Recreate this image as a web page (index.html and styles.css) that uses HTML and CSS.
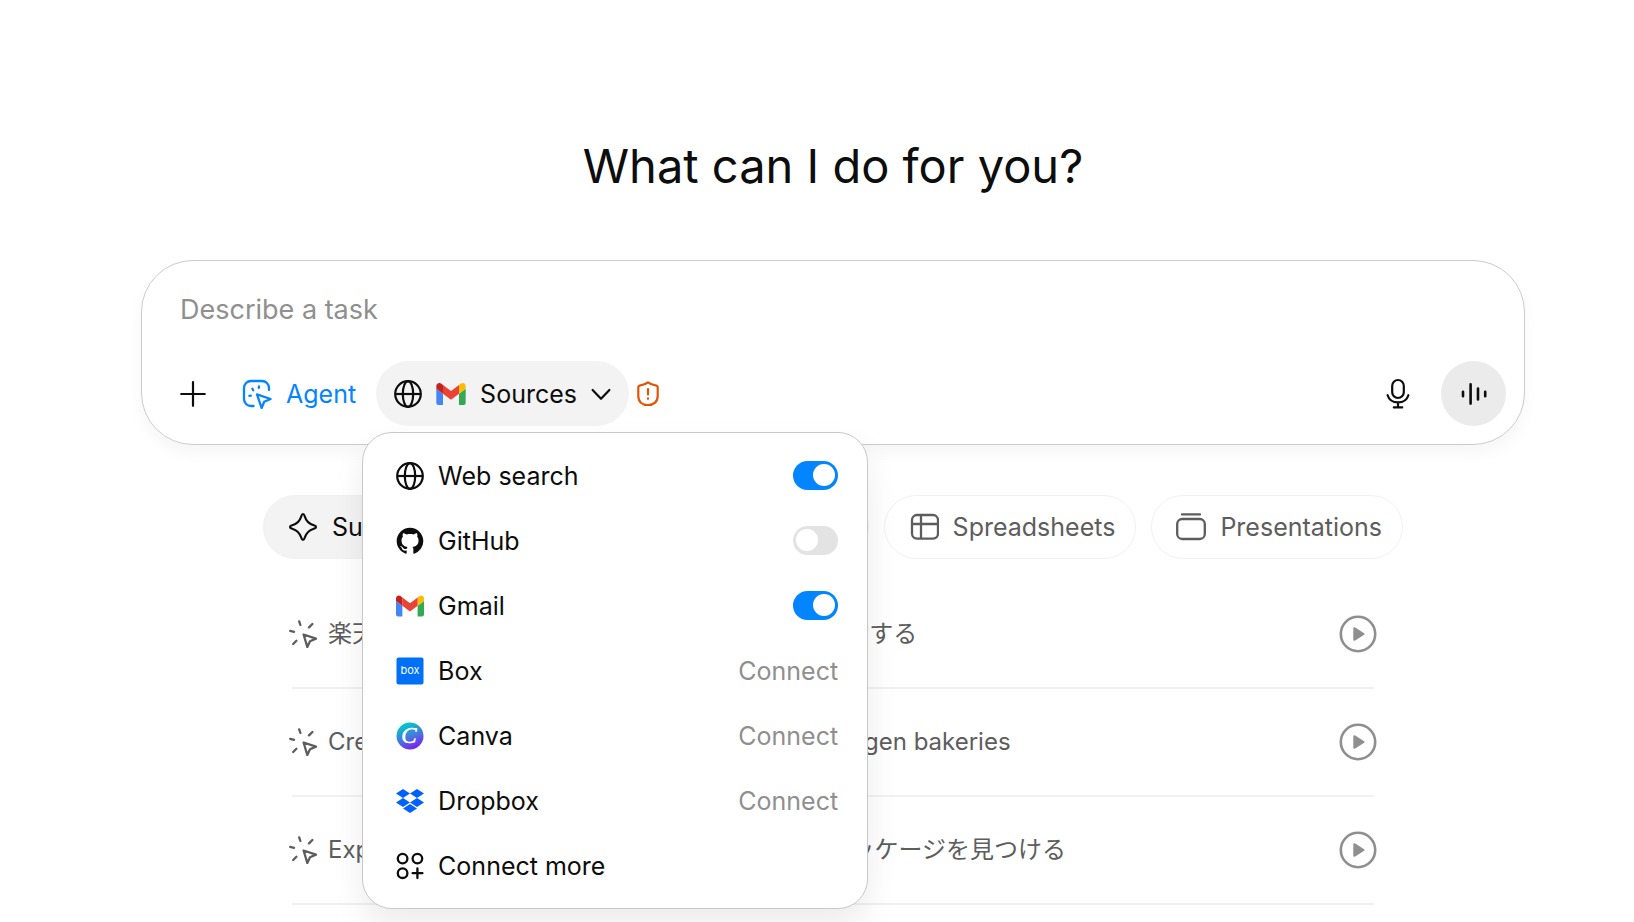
FILE: index.html
```
<!DOCTYPE html>
<html lang="en">
<head>
  <meta charset="UTF-8">
  <meta name="viewport" content="width=device-width, initial-scale=1">
  <title>What can I do for you?</title>
  <link rel="stylesheet" href="styles.css">
</head>
<body>
  <!-- shared icons -->
  <svg class="sprite" aria-hidden="true">
    <symbol id="globe" viewBox="0 0 28 28">
      <g fill="none" stroke="currentColor" stroke-width="2.2">
        <circle cx="14" cy="14" r="12.8"/>
        <ellipse cx="14" cy="14" rx="5.2" ry="12.8"/>
        <path d="M1 14h26"/>
      </g>
    </symbol>
    <symbol id="gmail" viewBox="52 42 88 66">
      <path fill="#4285f4" d="M58 108h14V74L52 59v43c0 3.32 2.69 6 6 6"/>
      <path fill="#34a853" d="M120 108h14c3.32 0 6-2.69 6-6V59l-20 15"/>
      <path fill="#fbbc04" d="M120 48v26l20-15v-8c0-7.42-8.47-11.65-14.4-7.2"/>
      <path fill="#ea4335" d="M72 74V48l24 18 24-18v26L96 92"/>
      <path fill="#c5221f" d="M52 51v8l20 15V48l-5.6-4.2c-5.94-4.45-14.4-.22-14.4 7.2"/>
    </symbol>
    <symbol id="click" viewBox="0 0 28 28">
      <g fill="none" stroke="currentColor" stroke-width="2.3" stroke-linecap="round" stroke-linejoin="round">
        <path d="M14.6 14.5 27 18.6 21 21.2 18.3 27Z"/>
        <path d="M10.2 1.4 11.4 5M23.4 4 20 7.4M1.2 10.8 5 11.8M7.4 20.8 4.2 24"/>
      </g>
    </symbol>
    <symbol id="play" viewBox="0 0 38 38">
      <circle cx="19" cy="19" r="17.2" fill="none" stroke="currentColor" stroke-width="2.6"/>
      <path d="M15.3 13.2v11.6L24.6 19Z" fill="currentColor" stroke="currentColor" stroke-width="2" stroke-linejoin="round"/>
    </symbol>
  </svg>

  <main>
    <h1>What can I do for you?</h1>

    <form class="composer">
      <input class="prompt" type="text" placeholder="Describe a task" aria-label="Describe a task">
      <div class="toolbar">
        <button type="button" class="round" aria-label="Add">
          <svg width="26" height="26" viewBox="0 0 26 26" fill="none" stroke="currentColor" stroke-width="2.2" stroke-linecap="round"><path d="M13 1.2v23.6M1.2 13h23.6"/></svg>
        </button>
        <button type="button" class="agent">
          <svg width="30" height="30" viewBox="0 0 30 30" fill="none" stroke="currentColor" stroke-width="2.3" stroke-linecap="round" stroke-linejoin="round">
            <path d="M27 11V9a7 7 0 0 0-7-7H9a7 7 0 0 0-7 7v11a7 7 0 0 0 7 7h2.6"/>
            <path d="M15 15.4 28.6 20 22.2 22.8 19.6 29Z"/>
            <path d="M10.4 9.8l.8 1.4M17 7.4l-.2 1.4M7.4 16.8l1.4-.2"/>
          </svg>
          Agent
        </button>
        <div class="sources">
          <button type="button" class="sources-button" aria-expanded="true">
            <svg width="28" height="28"><use href="#globe"/></svg>
            <svg width="30" height="22"><use href="#gmail"/></svg>
            Sources
            <svg width="20" height="14" viewBox="0 0 20 14" fill="none" stroke="currentColor" stroke-width="2.2" stroke-linecap="round" stroke-linejoin="round"><path d="M1.6 3 10 11.8 18.4 3"/></svg>
          </button>

          <div class="menu">
            <label class="menu-row">
              <svg width="28" height="28"><use href="#globe"/></svg>
              <span class="name">Web search</span>
              <input class="toggle" type="checkbox" checked>
            </label>
            <label class="menu-row">
              <svg width="28" height="28" viewBox="-.4 -.4 16.8 16.8"><path fill="currentColor" d="M8 0C3.58 0 0 3.58 0 8c0 3.54 2.29 6.53 5.47 7.59.4.07.55-.17.55-.38 0-.19-.01-.82-.01-1.49-2.01.37-2.53-.49-2.69-.94-.09-.23-.48-.94-.82-1.13-.28-.15-.68-.52-.01-.53.63-.01 1.08.58 1.23.82.72 1.21 1.87.87 2.33.66.07-.52.28-.87.51-1.07-1.78-.2-3.64-.89-3.64-3.95 0-.87.31-1.59.82-2.15-.08-.2-.36-1.02.08-2.12 0 0 .67-.21 2.2.82.64-.18 1.32-.27 2-.27s1.36.09 2 .27c1.53-1.04 2.2-.82 2.2-.82.44 1.1.16 1.92.08 2.12.51.56.82 1.27.82 2.15 0 3.07-1.87 3.75-3.65 3.95.29.25.54.73.54 1.48 0 1.07-.01 1.93-.01 2.2 0 .21.15.46.55.38A8.01 8.01 0 0 0 16 8c0-4.42-3.58-8-8-8"/></svg>
              <span class="name">GitHub</span>
              <input class="toggle" type="checkbox">
            </label>
            <label class="menu-row">
              <svg width="28" height="28"><use href="#gmail"/></svg>
              <span class="name">Gmail</span>
              <input class="toggle" type="checkbox" checked>
            </label>
            <button type="button" class="menu-row">
              <svg width="28" height="28" viewBox="0 0 28 28"><rect x=".5" y=".5" width="27" height="27" rx="2" fill="#0071f7"/><text class="box-mark" x="14" y="17" text-anchor="middle">box</text></svg>
              <span class="name">Box</span>
              <span class="connect">Connect</span>
            </button>
            <button type="button" class="menu-row">
              <svg width="28" height="28" viewBox="0 0 28 28">
                <defs>
                  <linearGradient id="canva" x1=".3" y1="0" x2=".7" y2="1"><stop offset=".1" stop-color="#05c3cc"/><stop offset=".55" stop-color="#4a75df"/><stop offset="1" stop-color="#7d18f2"/></linearGradient>
                </defs>
                <circle cx="14" cy="14" r="13.5" fill="url(#canva)"/>
                <text class="canva-mark" x="13" y="21" text-anchor="middle">C</text>
              </svg>
              <span class="name">Canva</span>
              <span class="connect">Connect</span>
            </button>
            <button type="button" class="menu-row">
              <svg width="28" height="28" viewBox="0 0 28 28" fill="#0061fe"><path d="M7 2l7 4.5-7 4.5-7-4.5ZM21 2l7 4.5-7 4.5-7-4.5ZM7 11l7 4.5L7 20l-7-4.5ZM21 11l7 4.5-7 4.5-7-4.5ZM14 17l7 4.5-7 4.5-7-4.5Z"/></svg>
              <span class="name">Dropbox</span>
              <span class="connect">Connect</span>
            </button>
            <button type="button" class="menu-row">
              <svg width="28" height="28" viewBox="0 0 28 28" fill="none" stroke="currentColor" stroke-width="2.3" stroke-linecap="round"><circle cx="6.6" cy="6.6" r="4.8"/><circle cx="21.4" cy="6.6" r="4.8"/><circle cx="6.6" cy="21.2" r="4.8"/><path d="M21.4 16.4V26M16.6 21.2h9.8"/></svg>
              <span class="name">Connect more</span>
            </button>
          </div>
        </div>
        <svg class="warning" width="22" height="26" viewBox="0 0 22 26" fill="none" stroke="currentColor" stroke-width="2.2" stroke-linecap="round" stroke-linejoin="round"><path d="M11 1.4C8.8 3.2 5.4 4.2 2.6 4.6 1.8 4.8 1.3 5.2 1.3 6v9c0 5.600 3.800 9 9.700 9s9.700-3.400 9.700-9V6c0-.8-.5-1.200-1.300-1.400C16.600 4.200 13.200 3.200 11 1.400Z"/><path d="M11 8v5.400M11 17.400v.4"/></svg>
        <button type="button" class="round mic" aria-label="Dictate">
          <svg width="24" height="32" viewBox="0 0 24 32" fill="none" stroke="currentColor" stroke-width="2.2" stroke-linecap="round"><rect x="6.2" y="2" width="11.6" height="18" rx="5.8"/><path d="M1.6 17.2c1.4 4.6 5.6 7.2 10.4 7.2s9-2.6 10.4-7.2M12 24.4V29M7.8 29.4h8.4"/></svg>
        </button>
        <button type="button" class="round voice" aria-label="Voice mode">
          <svg width="26" height="24" viewBox="0 0 26 24" fill="none" stroke="currentColor" stroke-width="2.6" stroke-linecap="round"><path d="M2 9.8v4.4M9.6 2.4v19.2M17 6.6v10.8M24.2 9.8v4.4"/></svg>
        </button>
      </div>
    </form>

    <nav class="tabs">
      <button type="button" class="tab active">
        <svg width="30" height="30" viewBox="0 0 30 30" fill="none" stroke="currentColor" stroke-width="2.2" stroke-linejoin="round"><path d="M15 2c.9 0 1.3.8 1.7 2.2 1.5 5.1 4 7.6 9.1 9.1 1.4.4 2.2.8 2.2 1.7s-.8 1.3-2.2 1.7c-5.1 1.5-7.6 4-9.1 9.1-.4 1.4-.8 2.2-1.7 2.2s-1.3-.8-1.7-2.2c-1.5-5.1-4-7.6-9.1-9.1C2.8 16.3 2 15.9 2 15s.8-1.3 2.2-1.7c5.1-1.5 7.6-4 9.1-9.1C13.7 2.8 14.1 2 15 2Z"/></svg>
        Suggested
      </button>
      <button type="button" class="tab wide">
        <svg width="30" height="30" viewBox="0 0 30 30" fill="none" stroke="currentColor" stroke-width="2.2"><rect x="5" y="2" width="20" height="26" rx="4"/><path d="M10 10h10M10 16h10"/></svg>
        Reports
      </button>
      <button type="button" class="tab">
        <svg width="30" height="30" viewBox="0 0 30 30" fill="none" stroke="currentColor" stroke-width="2.3"><rect x="3" y="3" width="26" height="23.600" rx="5"/><path d="M3 12h26M12 3v23.600"/></svg>
        Spreadsheets
      </button>
      <button type="button" class="tab">
        <svg width="30" height="30" viewBox="0 0 30 30" fill="none" stroke="currentColor" stroke-width="2.3" stroke-linecap="round"><rect x="1.2" y="7" width="27.6" height="20" rx="5"/><path d="M6 2.4h18"/></svg>
        Presentations
      </button>
    </nav>

    <ul class="tasks">
      <li>
        <svg class="task-icon" width="28" height="28"><use href="#click"/></svg>
        <span class="task" lang="ja">楽天市場で人気の5商品を比較しておすすめを要約する</span>
        <button type="button" class="play" aria-label="Play"><svg width="38" height="38"><use href="#play"/></svg></button>
      </li>
      <li>
        <svg class="task-icon" width="28" height="28"><use href="#click"/></svg>
        <span class="task">Create a presentation on the five best Copenhagen bakeries</span>
        <button type="button" class="play" aria-label="Play"><svg width="38" height="38"><use href="#play"/></svg></button>
      </li>
      <li>
        <svg class="task-icon" width="28" height="28"><use href="#click"/></svg>
        <span class="task" lang="ja">Expediaで12月中のハワイ旅行に最適な格安のパッケージを見つける</span>
        <button type="button" class="play" aria-label="Play"><svg width="38" height="38"><use href="#play"/></svg></button>
      </li>
    </ul>
  </main>
</body>
</html>
```
FILE: styles.css
```
* {
  box-sizing: border-box;
}
body {
  margin: 0;
  min-height: 100vh;
  padding: 136px 109px 0 141px;
  background: #fff;
  color: #0d0d0d;
  font-family: Inter, "Noto Sans CJK JP", sans-serif;
  font-size: 25px;
  line-height: 32px;
}
button, input {
  font: inherit;
  color: inherit;
}
button {
  display: flex;
  align-items: center;
  padding: 0;
  border: 0;
  background: none;
  white-space: nowrap;
  cursor: pointer;
}
svg {
  flex: none;
}
.sprite {
  position: absolute;
  width: 0;
  height: 0;
}
h1 {
  margin: 0 0 64px;
  font-size: 47px;
  font-weight: 400;
  line-height: 60px;
  text-align: center;
}

/* composer */
.composer {
  padding: 30px 18px 18px;
  border: 1px solid #cbcbcb;
  border-radius: 52px;
  box-shadow: 0 8px 16px rgba(0, 0, 0, 0.04);
}
.prompt {
  display: block;
  width: 100%;
  height: 36px;
  margin-bottom: 34px;
  padding: 0 20px;
  border: 0;
  outline: 0;
  background: none;
  font-size: 27px;
}
.prompt::placeholder {
  color: #8f8f8f;
  opacity: 1;
}
.toolbar {
  display: flex;
  align-items: center;
  height: 65px;
}
.round {
  justify-content: center;
  width: 65px;
  height: 65px;
  border-radius: 50%;
}
.agent {
  gap: 14px;
  height: 65px;
  padding: 0 20px 0 17px;
  color: #0285ff;
}
.sources {
  position: relative;
}
.sources-button {
  gap: 14px;
  height: 65px;
  padding: 0 18px;
  border-radius: 33px;
  background: #f3f3f3;
}
.warning {
  margin-left: 8px;
  color: #e25507;
}
.mic {
  margin-left: auto;
  margin-right: 11px;
}
.voice {
  background: #ebebeb;
}

/* sources menu */
.menu {
  position: absolute;
  top: 71px;
  left: -14px;
  z-index: 1;
  width: 506px;
  padding: 10px 0;
  border: 1px solid #c8c8c8;
  border-radius: 30px;
  background: #fff;
  box-shadow: 0 16px 32px rgba(0, 0, 0, 0.08);
}
.menu-row {
  display: flex;
  align-items: center;
  gap: 14px;
  width: 100%;
  height: 65px;
  padding: 0 29px 0 33px;
  text-align: left;
  cursor: pointer;
}
.name {
  flex: 1;
}
.connect {
  color: #8f8f8f;
}
.toggle {
  appearance: none;
  width: 45px;
  height: 29px;
  margin: 0;
  padding: 3px;
  border-radius: 15px;
  background: #e3e3e3;
  cursor: pointer;
}
.toggle::before {
  content: "";
  display: block;
  width: 22px;
  height: 22px;
  border-radius: 50%;
  background: #fff;
}
.toggle:checked {
  background: #0285ff;
}
.toggle:checked::before {
  margin-left: auto;
}
.box-mark {
  fill: #fff;
  font-size: 11px;
  font-weight: 400;
}
.canva-mark {
  fill: #fff;
  stroke: #fff;
  font-family: "Liberation Serif", serif;
  font-size: 23px;
  font-style: italic;
  stroke-width: 0.5px;
}

/* category tabs */
.tabs {
  display: flex;
  gap: 15px;
  max-width: 1140px;
  margin: 50px auto 22px;
}
.tab {
  gap: 14px;
  height: 64px;
  padding: 0 20px 0 24px;
  border: 1px solid #f1f1f1;
  border-radius: 32px;
  color: #5d5d5d;
}
.tab.active {
  background: #f3f3f3;
  color: #0d0d0d;
}
.tab.wide {
  flex: 1;
}

/* suggested tasks */
.tasks {
  max-width: 1082px;
  margin: 0 auto;
  padding: 0;
  list-style: none;
  color: #5d5d5d;
  font-size: 24px;
}
.tasks li {
  display: flex;
  align-items: center;
  gap: 11px;
  height: 108px;
  border-bottom: 2px solid #f1f1f1;
}
.task {
  flex: 1;
  white-space: nowrap;
}
/* icons hang slightly past the divider */
.task-icon, .play {
  margin: 0 -3px;
}
.task-icon {
  margin-right: 0;
}
.play {
  color: #8f8f8f;
}
```
